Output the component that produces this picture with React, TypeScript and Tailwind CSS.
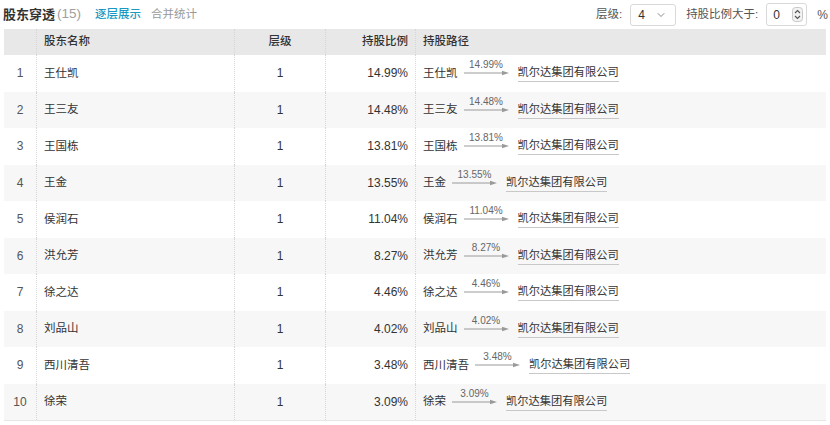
import { ChevronDown } from "lucide-react";

const rows = [
  { name: "王仕凯", ratio: "14.99%" },
  { name: "王三友", ratio: "14.48%" },
  { name: "王国栋", ratio: "13.81%" },
  { name: "王金", ratio: "13.55%" },
  { name: "侯润石", ratio: "11.04%" },
  { name: "洪允芳", ratio: "8.27%" },
  { name: "徐之达", ratio: "4.46%" },
  { name: "刘品山", ratio: "4.02%" },
  { name: "西川清吾", ratio: "3.48%" },
  { name: "徐荣", ratio: "3.09%" },
];

const COMPANY = "凯尔达集团有限公司";

function Arrow({ label }: { label: string }) {
  return (
    <span className="ml-[6px] mr-[9px] flex w-[45px] flex-col items-center pb-[11px]">
      <span className="h-[11px] text-[10px] leading-[11px] text-[#666]">{label}</span>
      <svg width="45" height="6" viewBox="0 0 45 6" className="block">
        <line x1="0" y1="3" x2="39" y2="3" stroke="#9a9a9a" strokeWidth="1" />
        <polygon points="38,0.8 45,3 38,5.2" fill="#9a9a9a" />
      </svg>
    </span>
  );
}

function Spinner() {
  return (
    <svg width="11" height="15" viewBox="0 0 11 15">
      <rect x="0.5" y="0.5" width="10" height="14" rx="3" fill="#f2f2f2" stroke="#c8c8c8" />
      <polyline points="3,6 5.5,3.5 8,6" fill="none" stroke="#555" strokeWidth="1.1" />
      <polyline points="3,9 5.5,11.5 8,9" fill="none" stroke="#555" strokeWidth="1.1" />
    </svg>
  );
}

const cell = "border-l border-dotted border-[#d6d6d6]";

export default function App() {
  return (
    <div
      className="h-[425px] w-[830px] bg-white text-[12px] text-[#333]"
      style={{ fontFamily: '"Liberation Sans", "Noto Sans CJK SC", sans-serif' }}
    >
      <div className="flex h-[29px] items-center justify-between pl-[3px] pr-[2px]">
        <div className="flex items-center">
          <span className="text-[13px] font-bold text-[#333]">股东穿透</span>
          <span className="ml-[2px] text-[13.5px] text-[#a0a0a0]">(15)</span>
          <span className="ml-[14px] text-[11.5px] font-medium text-[#1998c2]">逐层展示</span>
          <span className="ml-[10px] text-[11.5px] text-[#999]">合并统计</span>
        </div>
        <div className="flex items-center text-[11.5px] text-[#555]">
          <span>层级:</span>
          <div className="ml-[8px] flex h-[22px] w-[46px] items-center justify-between rounded-[3px] border border-[#d9d9d9] pl-[7px] pr-[8px] text-[12px] text-[#333]">
            <span>4</span>
            <ChevronDown size={12} strokeWidth={1.5} color="#666" />
          </div>
          <span className="ml-[10px]">持股比例大于:</span>
          <div className="ml-[8px] flex h-[23px] w-[41px] items-center justify-between rounded-[3px] border border-[#d9d9d9] pl-[6px] pr-[3px] text-[12px] text-[#333]">
            <span>0</span>
            <Spinner />
          </div>
          <span className="ml-[10px] text-[12px]">%</span>
        </div>
      </div>

      <div className="mx-[4px] border-b border-[#e6e6e6]">
        <div className="grid h-[26px] grid-cols-[32px_198px_91px_90px_1fr] items-stretch bg-[#e8e8e8] text-[11.5px] font-medium">
          <div />
          <div className={`${cell} flex items-center pl-[7px]`}>股东名称</div>
          <div className={`${cell} flex items-center justify-center`}>层级</div>
          <div className={`${cell} flex items-center justify-end pr-[7px]`}>持股比例</div>
          <div className={`${cell} flex items-center pl-[7px]`}>持股路径</div>
        </div>
        {rows.map((r, i) => (
          <div
            key={r.name}
            className={`grid h-[36.5px] grid-cols-[32px_198px_91px_90px_1fr] items-stretch ${
              i % 2 === 1 ? "bg-[#f7f7f7]" : "bg-white"
            }`}
          >
            <div className="flex items-center justify-center text-[#555]">{i + 1}</div>
            <div className={`${cell} flex items-center pl-[7px] text-[11.5px]`}>{r.name}</div>
            <div className={`${cell} flex items-center justify-center`}>1</div>
            <div className={`${cell} flex items-center justify-end pr-[7px]`}>{r.ratio}</div>
            <div className={`${cell} flex items-center pl-[7px] text-[11.5px]`}>
              <span>{r.name}</span>
              <Arrow label={r.ratio} />
              <span className="border-b border-[#c8c8c8] pb-[1px] text-[11.25px] leading-[16px]">{COMPANY}</span>
            </div>
          </div>
        ))}
      </div>
    </div>
  );
}
